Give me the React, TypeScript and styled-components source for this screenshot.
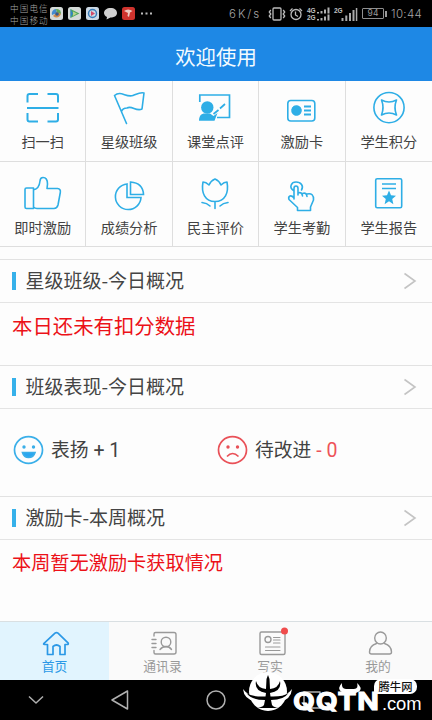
import React from 'react';
import styled, { createGlobalStyle } from 'styled-components';

const BLUE = '#2eaee6';

const GlobalStyle = createGlobalStyle`
  * { box-sizing: border-box; }
  body {
    margin: 0;
    background: #fff;
    font-family: 'Noto Sans CJK SC', 'Noto Sans', sans-serif;
    color: #424242;
  }
  svg { display: block; flex: none; overflow: visible; }
`;

const Screen = styled.div`
  position: relative;
  width: 432px;
  height: 720px;
  overflow: hidden;
  display: flex;
  flex-direction: column;
  background: #fdfdfd;
`;

const StatusBar = styled.header`
  height: 27px;
  flex: none;
  background: #000;
  color: #a6a6a6;
  display: flex;
  align-items: center;
  padding: 0 9px 0 10px;
`;

const Carriers = styled.div`
  width: 40px;
  font-size: 8.6px;
  letter-spacing: 1.1px;
  line-height: 12px;
  font-weight: 300;
  white-space: nowrap;
`;

const Tray = styled.div`
  display: flex;
  align-items: center;
  gap: 5px;
  flex: 1;
`;

const StatusText = styled.span<{ $width: number; $spacing: number }>`
  width: ${(p) => p.$width}px;
  font: 300 11.5px/16px Inter, sans-serif;
  letter-spacing: ${(p) => p.$spacing}px;
  white-space: nowrap;
  padding-top: 1px;
`;

const Indicators = styled.div`
  display: flex;
  align-items: center;
  margin-right: 4px;
`;

const TitleBar = styled.h1`
  height: 54px;
  flex: none;
  margin: 0;
  padding-top: 5px;
  background: #1e88e5;
  color: #f3fbff;
  font-size: 20.4px;
  line-height: 48px;
  font-weight: 400;
  text-align: center;
`;

const MenuGrid = styled.nav`
  flex: none;
  display: grid;
  grid-template-columns: repeat(5, 1fr);
  grid-template-rows: 81px 85px;
`;

const MenuCell = styled.a`
  display: flex;
  flex-direction: column;
  align-items: center;
  border-bottom: 1px solid #dedede;
  border-right: 1px solid #dedede;
  padding-top: 7px;
  &:nth-child(5n) { border-right: 0; }
  &:nth-child(n + 6) { padding-top: 11px; }
`;

const MenuLabel = styled.span`
  font-size: 14.2px;
  line-height: 20px;
  margin-top: 3px;
  white-space: nowrap;
  color: #424242;
  ${MenuCell}:nth-child(n + 6) & { margin-top: 4px; }
`;

const MenuIcon = styled.svg.attrs({ viewBox: '0 0 40 40', width: 40, height: 40 })`
  fill: none;
  stroke: ${BLUE};
  stroke-width: 1.6;
  stroke-linejoin: round;
  stroke-linecap: round;
`;

const Panel = styled.section<{ $height: number; $gap?: number }>`
  flex: none;
  height: ${(p) => p.$height}px;
  margin-top: ${(p) => p.$gap || 0}px;
`;

const PanelHeader = styled.div`
  height: 43.5px;
  border-top: 1.5px solid #e2e2e2;
  border-bottom: 1.5px solid #e4e4e4;
  display: flex;
  align-items: center;
  padding: 0 16px 0 12px;
`;

const Accent = styled.i`
  width: 3.5px;
  height: 18px;
  background: #36b1ea;
  margin-right: 10px;
`;

const PanelTitle = styled.h2`
  flex: 1;
  margin: -2px 0 0;
  font-size: 19px;
  line-height: 28px;
  font-weight: 400;
  color: #444;
`;

const Notice = styled.p<{ $size: number }>`
  margin: 8.5px 0 0 12px;
  font-size: ${(p) => p.$size}px;
  line-height: 28px;
  color: #ec1118;
`;

const Scores = styled.div`
  display: grid;
  grid-template-columns: 204px 1fr;
  padding: 25px 0 0 13px;
`;

const Score = styled.div`
  display: flex;
  align-items: center;
  gap: 7px;
  font-size: 18.8px;
  line-height: 30px;
  white-space: pre;
`;

const Points = styled.span<{ $negative?: boolean }>`
  font-family: Roboto, sans-serif;
  font-size: 19.5px;
  color: ${(p) => (p.$negative ? '#ee5359' : 'inherit')};
`;

const TabBar = styled.nav`
  height: 59px;
  flex: none;
  margin-top: auto;
  display: grid;
  grid-template-columns: 109px 107px 108px 108px;
  background: #fafafa;
  border-top: 1px solid #d9dfe2;
`;

const Tab = styled.a<{ $active?: boolean }>`
  display: flex;
  flex-direction: column;
  align-items: center;
  padding-top: 8px;
  font-size: 12.8px;
  line-height: 15px;
  color: ${(p) => (p.$active ? '#2b98e6' : '#999')};
  background: ${(p) => (p.$active ? '#e1f4fe' : 'transparent')};
`;

const TabIcon = styled.svg.attrs({ viewBox: '0 0 28 28', width: 28, height: 28 })`
  fill: none;
  stroke: currentColor;
  stroke-width: 1.4;
  stroke-linejoin: round;
  stroke-linecap: round;
`;

const SystemNav = styled.footer`
  height: 40px;
  flex: none;
  background: #000;
  display: grid;
  grid-template-columns: 72px 96px 96px 96px 72px;
  align-items: center;
  justify-items: center;
  svg { fill: none; stroke: #b0b0b0; stroke-width: 1.5; stroke-linejoin: round; }
`;

const Watermark = styled.div`
  position: absolute;
  left: 243px;
  top: 671px;
  display: flex;
  color: #fff;
`;

const Brand = styled.div`
  display: flex;
  align-items: baseline;
  margin: 22px 0 0 1px;
  line-height: 18px;
`;

const BrandName = styled.span`
  width: 89px;
  font: 700 24px/18px Inter, sans-serif;
  letter-spacing: 0.6px;
  -webkit-text-stroke: 1px #fff;
  transform: scaleX(1.18);
  transform-origin: left;
`;

const BrandSuffix = styled.span`
  font: 18.4px/17px 'Liberation Sans', sans-serif;
  letter-spacing: -0.1px;
`;

const Horns = styled.svg`
  position: absolute;
  left: 95px;
  top: 11px;
`;

const Bubble = styled.span`
  position: absolute;
  left: 131px;
  top: 8px;
  width: 43px;
  height: 15px;
  border-radius: 7px 7px 7px 3px;
  background: #fff;
  color: #111;
  font-size: 11.3px;
  line-height: 14px;
  text-align: center;
  font-weight: 500;
`;

const menu: { label: string; icon: React.ReactNode }[] = [
  {
    label: '扫一扫',
    icon: (
      <g strokeWidth="2" strokeLinecap="butt">
        <path d="M4.500 14.500V8Q4.500 6 6.500 6H15M24.500 6H33Q35 6 35 8V14.500M4.500 25V31.500Q4.500 33.500 6.500 33.500H15M24.500 33.500H33Q35 33.500 35 31.500V25M4 20H35.500" />
      </g>
    ),
  },
  {
    label: '星级班级',
    icon: <path d="M5.500 7.500L17.500 35.500M5.500 7.500C12 2 17 10 24 7.500C28 6 31 4 35 5L33 21C27 24 23 17 18 20C15 20 13 22 12.500 23.500" />,
  },
  {
    label: '课堂点评',
    icon: (
      <g strokeLinecap="butt" strokeLinejoin="miter">
        <path d="M4.800 14V7H34.500V29.500H22M30 16L25 20.500M23.500 22L18.500 26" strokeWidth="1.700" />
        <circle cx="12.300" cy="19.500" r="6.200" fill={BLUE} stroke="none" />
        <path d="M4 32.800C4 28 6 25.500 10 25.500H15L18.500 28L22.500 25L19.500 32.800Z" fill={BLUE} stroke="none" />
      </g>
    ),
  },
  {
    label: '激励卡',
    icon: (
      <g>
        <rect x="5.800" y="12.500" width="27" height="20.500" rx="3" />
        <circle cx="14.500" cy="22.500" r="4.500" fill={BLUE} strokeDasharray="1 1" />
        <path d="M22 18.500H29M22 22.500H29M22 26.500H29" strokeWidth="1.900" strokeLinecap="butt" />
      </g>
    ),
  },
  {
    label: '学生积分',
    icon: (
      <g strokeWidth="1.600">
        <circle cx="20" cy="19.600" r="15.100" />
        <path d="M12.500 12Q20 16 27.500 12Q24.500 19.500 27.500 27Q20 23 12.500 27Q15.500 19.500 12.500 12Z" />
      </g>
    ),
  },
  {
    label: '即时激励',
    icon: (
      <path d="M3.500 15H10.500V35.500H3.500Q2 35.500 2 34V16.500Q2 15 3.500 15ZM10.500 17C15 16 16.500 13 17 8Q17.200 4.500 20 4.500Q24.500 4.500 24.500 11L24 15.500H34.500Q38 16 37.300 19.500L35 32Q34 35.500 31 35.500H14Q12 35.500 10.500 34" />
    ),
  },
  {
    label: '成绩分析',
    icon: (
      <g strokeLinejoin="miter">
        <path d="M18 11A12.800 12.800 0 1 0 32 24.500H18Z" />
        <path d="M21.500 9V21.500H34.500Q34 10 21.500 9Z" />
      </g>
    ),
  },
  {
    label: '民主评价',
    icon: (
      <path d="M20 28.500V35.500M20 28.500C10 28.500 6 20 8 9Q11 9 14 12Q16 7.500 20 6Q24 7.500 26 12Q29 9 32 9C34 20 30 28.500 20 28.500M7 29.500Q12 30 15 33M33 29.500Q28 30 25 33" />
    ),
  },
  {
    label: '学生考勤',
    icon: (
      <path d="M11.500 17.500C6.500 14 9.500 9 14 9C19 9 22 13 19.500 17M12 26V15.500Q12 13 14 13Q16 13 16 15.500V22M16 20Q20 18.500 20.500 23M20.500 20.500Q24.500 19 25 23.500M25 21Q32 19.500 31.500 27L28.500 34V37.500H15.500V34.500L7 26.500Q6 24 8 23Q10 22.500 12 25" />
    ),
  },
  {
    label: '学生报告',
    icon: (
      <g>
        <rect x="6.700" y="5.800" width="26" height="29" rx="1.500" />
        <path d="M13 11H27M13 15.500H27" strokeLinecap="butt" />
        <path d="M20 17.500L22 22.200L27 22.700L23.200 26L24.400 31.200L20 28.300L15.600 31.200L16.800 26L13 22.700L18 22.200Z" fill={BLUE} stroke="none" />
      </g>
    ),
  },
];

const Chevron = () => (
  <svg width="12" height="18" viewBox="0 0 12 18" fill="none" stroke="#c4c4c4" strokeWidth="1.600">
    <path d="M0.500 1.500L11 9L0.500 16.500" />
  </svg>
);

const SectionHeader = ({ title }: { title: string }) => (
  <PanelHeader>
    <Accent />
    <PanelTitle>{title}</PanelTitle>
    <Chevron />
  </PanelHeader>
);

const Face = ({ sad }: { sad?: boolean }) => (
  <svg width="31" height="30" viewBox="0 0 31 30" fill="none" stroke={sad ? '#e95158' : '#3aafe9'} strokeWidth="1.700">
    <ellipse cx="15.500" cy="15" rx="14" ry="13.400" />
    <g fill={sad ? '#e95158' : '#3aafe9'} stroke="none">
      <circle cx="11" cy="12" r="1.700" />
      <circle cx="20.500" cy="12" r="1.700" />
    </g>
    {sad ? <path d="M10 21.500Q15.500 15.500 21.500 21.500" /> : <path d="M9.500 17.500H22Q20.500 22.500 15.500 22.500Q11 22.500 9.500 17.500Z" fill="#2aa6f0" />}
  </svg>
);

const TrayIcons = () => (
  <Tray>
    <svg width="13" height="13" viewBox="0 0 13 13">
      <rect width="13" height="13" rx="2.500" fill="#d5dad8" />
      <path d="M2 8A4.500 4.500 0 0 1 6 2L7 6Z" fill="#438bd0" />
      <path d="M6 2A4.500 4.500 0 0 1 11 7L7 6Z" fill="#61a757" />
      <path d="M3 9Q8 13 11 7L7 5Z" fill="#d18a4a" />
      <circle cx="7" cy="7" r="1.800" fill="#34598a" />
    </svg>
    <svg width="13" height="13" viewBox="0 0 13 13">
      <rect width="13" height="13" rx="2.500" fill="#d5dad8" />
      <path d="M2.500 2L11.500 6.500L2.500 11Z" fill="#52a75f" />
      <path d="M2.500 2L5 6.500L2.500 11Z" fill="#3283c6" />
      <path d="M5 4.500L9 6.500L5 9Z" fill="#b9d48a" />
    </svg>
    <svg width="13" height="13" viewBox="0 0 13 13">
      <rect width="13" height="13" rx="2.500" fill="#ccd9e5" />
      <circle cx="6.500" cy="6.500" r="4" fill="none" stroke="#397cb9" strokeWidth="1.500" />
      <path d="M5 4L9 6.500L5 9Z" fill="#d14b6a" />
    </svg>
    <svg width="13" height="13" viewBox="0 0 13 13">
      <path d="M6.500 1C10.500 1 13 3 13 6C13 9 10 10.500 6.500 10.500L2.500 12.500L3 10C1 9 0 7.500 0 6C0 3 3 1 6.500 1Z" fill="#d0d0d0" />
    </svg>
    <svg width="13" height="13" viewBox="0 0 13 13">
      <rect width="13" height="13" rx="2.500" fill="#cf332d" />
      <path d="M2 4Q6 1 10.500 4L8 5.500L7 10L5.500 9L6 6Z" fill="#efcac1" />
    </svg>
    <svg width="12" height="3" viewBox="0 0 12 3" fill="#bbb">
      <path d="M1 .5h2v2h-2zM5.500 .5h2v2h-2zM10 .5h2v2h-2z" />
    </svg>
  </Tray>
);

const Network = styled.span`
  font: 700 6.5px/7px 'Liberation Sans', sans-serif;
  width: 9px;
  color: #c0c0c0;
`;

const SignalStack = styled.div`
  display: flex;
  align-items: flex-start;
  margin-left: 4px;
`;

const SmallSignal = styled.div`
  display: flex;
  flex-direction: column;
`;

const Battery = styled.span`
  width: 22px;
  height: 11px;
  margin-left: 5px;
  border: 1px solid #8f8f8f;
  border-radius: 1px;
  font: 8.5px/9px Inter, sans-serif;
  text-align: center;
  color: #999;
`;

const BatteryTip = styled.i`
  width: 2px;
  height: 6px;
  margin-left: 1px;
  background: #999;
`;

const Bars = () => (
  <svg width="14" height="7" viewBox="0 0 14 7" fill="#b0b0b0">
    <path d="M1 5h2v1.500h-2zM4.500 4h2v2.500h-2zM8 2.500h2v4h-2zM11.500 .5h2v6h-2z" />
  </svg>
);

export default function App() {
  return (
    <>
      <GlobalStyle />
      <Screen>
        <StatusBar>
          <Carriers>
            <div>中国电信</div>
            <div>中国移动</div>
          </Carriers>
          <TrayIcons />
          <StatusText $width={39} $spacing={2}>6K/s</StatusText>
          <Indicators>
            <svg width="18" height="14" viewBox="0 0 18 14" fill="none" stroke="#bbb" strokeWidth="1.300">
              <rect x="5" y="1" width="8" height="12" rx="1" />
              <path d="M2.800 3L1.300 5L2.800 7L1.300 9L2.800 11M15.200 3L16.700 5L15.200 7L16.700 9L15.200 11" />
            </svg>
            <svg width="17" height="14" viewBox="0 0 17 14" fill="none" stroke="#bbb" strokeWidth="1.300">
              <circle cx="10" cy="7.500" r="5" />
              <path d="M9.500 4.500V8L12 9.500M4 4L6.500 1.500M13.500 1.500L16 4" />
            </svg>
            <SignalStack>
              <SmallSignal>
                <Network>4G</Network>
                <Network>2G</Network>
              </SmallSignal>
              <SmallSignal>
                <Bars />
                <Bars />
              </SmallSignal>
            </SignalStack>
            <SignalStack>
              <Network>2G</Network>
              <svg width="14" height="14" viewBox="0 0 14 14" fill="#aaa">
                <path d="M-1.500 11h2v3h-2zM2.300 8.500h2v5.500h-2zM6 6h2v8h-2zM9.500 3h2v11h-2zM12.800 1h1.500v13h-1.500z" />
              </svg>
            </SignalStack>
            <Battery>94</Battery>
            <BatteryTip />
          </Indicators>
          <StatusText $width={32} $spacing={0.35}>10:44</StatusText>
        </StatusBar>
        <TitleBar>欢迎使用</TitleBar>
        <MenuGrid>
          {menu.map((item) => (
            <MenuCell key={item.label}>
              <MenuIcon>{item.icon}</MenuIcon>
              <MenuLabel>{item.label}</MenuLabel>
            </MenuCell>
          ))}
        </MenuGrid>
        <Panel $height={106} $gap={12}>
          <SectionHeader title="星级班级-今日概况" />
          <Notice $size={20.4}>本日还未有扣分数据</Notice>
        </Panel>
        <Panel $height={131}>
          <SectionHeader title="班级表现-今日概况" />
          <Scores>
            <Score>
              <Face />
              <span>表扬<Points> + 1</Points></span>
            </Score>
            <Score>
              <Face sad />
              <span>待改进<Points $negative> - 0</Points></span>
            </Score>
          </Scores>
        </Panel>
        <Panel $height={124}>
          <SectionHeader title="激励卡-本周概况" />
          <Notice $size={19.2}>本周暂无激励卡获取情况</Notice>
        </Panel>
        <TabBar>
          <Tab $active>
            <TabIcon>
              <path d="M5.500 14.500H3.500Q2 14.500 3 13.300L14 3.200Q15.500 2 17 3.200L27 12.800Q28 14.500 26 14.500H24V24.500H19V16.500Q15.500 13.500 12 16.500V24.500H6.500V14.500" strokeWidth="1.700" />
            </TabIcon>
            首页
          </Tab>
          <Tab>
            <TabIcon>
              <path d="M5 6V4Q5 2.500 6.500 2.500H25Q27 2.500 27 4.500V22Q27 24 25 24H6.500Q5 24 5 22.500V20.500M3 9.500H7M3 13.500H7M3 17.500H7" />
              <circle cx="17" cy="12" r="4.800" />
              <path d="M11 19.500Q13.500 16.500 17 16.500Q20.500 16.500 22.500 19.500" />
            </TabIcon>
            通讯录
          </Tab>
          <Tab>
            <TabIcon>
              <rect x="4" y="2" width="25" height="22.500" rx="1.500" />
              <circle cx="12" cy="9.500" r="3" />
              <path d="M17.500 7.500H24M17.500 10H24M17.500 13H24M9.500 17H24M9.500 20.500H24" strokeWidth="1.100" />
              <circle cx="28.500" cy="1" r="3.500" fill="#f04c4c" stroke="none" />
            </TabIcon>
            写实
          </Tab>
          <Tab>
            <TabIcon>
              <ellipse cx="16.500" cy="8" rx="5.800" ry="6" />
              <path d="M12.500 13.500C8 15 5.500 18 5.500 22Q5.500 24 7.500 24H25.500Q27.500 24 27.500 22C27.500 18 25 15 20.500 13.500" />
            </TabIcon>
            我的
          </Tab>
        </TabBar>
        <SystemNav>
          <svg width="16" height="10" viewBox="0 0 16 10"><path d="M1 1.500L8 8L15 1.500" /></svg>
          <svg width="20" height="20" viewBox="0 0 20 20"><path d="M17.500 1V19L2 10Z" /></svg>
          <svg width="20" height="20" viewBox="0 0 20 20"><circle cx="10" cy="10" r="9" /></svg>
          <svg width="18" height="18" viewBox="0 0 18 18"><rect x="1" y="1" width="16" height="16" /></svg>
        </SystemNav>
        <Watermark>
          <svg width="49" height="42" viewBox="0 0 49 42">
            <ellipse cx="25" cy="20.500" rx="19" ry="19.500" fill="#fff" />
            <path d="M0 18Q1 29 14 31H36Q48 29 49 18Q44 25 35 25H14Q5 25 0 18Z" fill="#fff" />
            <path d="M3.500 22Q9 26 22.500 25.500L23 22Q11 20 13 10Q15 17.500 23 18L23.500 8L25 4L26.500 8L27 18Q35 17.500 37 10Q39 20 27 22L27.500 25.500Q40 26 45.500 22Q41 29 28 29L29 34Q31 36.500 36 37H13Q19 36.500 21 34L22 29Q8 29 3.500 22Z" fill="#000" />
          </svg>
          <Brand>
            <BrandName>QQTN</BrandName>
            <BrandSuffix>.com</BrandSuffix>
          </Brand>
          <Horns width="24" height="14" viewBox="0 0 24 14">
            <path d="M4 1Q-1 6 3 9.500Q7 12 12 12T21 9.500Q25 6 19 1Q21 6.500 16 7H8Q3 6.500 4 1Z" fill="#fff" />
          </Horns>
          <Bubble>腾牛网</Bubble>
        </Watermark>
      </Screen>
    </>
  );
}
